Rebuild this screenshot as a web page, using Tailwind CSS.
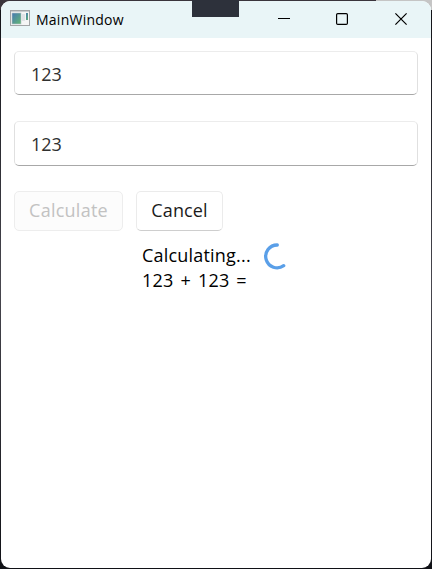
<!DOCTYPE html>
<html lang="en">
<head>
<meta charset="utf-8">
<title>MainWindow</title>
<script src="https://cdn.jsdelivr.net/npm/@tailwindcss/browser@4"></script>
</head>
<body class="h-[569px] w-[432px] overflow-hidden bg-linear-to-b from-[#101116] via-[#48474f] to-[#101116] font-['Open_Sans','Noto_Sans',sans-serif]">
<div class="relative h-full w-full bg-[linear-gradient(90deg,#3a343c_376px,#c5c5c5_376px)] bg-[length:100%_10px] bg-no-repeat px-px pt-px pb-px">
  <div class="flex h-full flex-col overflow-hidden rounded-[9px] bg-white">
    <header class="flex h-[37px] shrink-0 items-center bg-[#e9f5f7] pl-[9px]">
      <svg class="mb-[3px] shrink-0" width="20" height="16" viewBox="0 0 20 16">
        <defs><linearGradient id="g" x1="0" y1="0" x2="1" y2="1"><stop stop-color="#4778b4"/><stop offset="1" stop-color="#63b873"/></linearGradient></defs>
        <rect x=".5" y=".5" width="19" height="15" fill="#f5f5f5" stroke="#a3a5a7"/>
        <path d="M1 1.5h18" stroke="#c9cccf"/>
        <rect x="2" y="3" width="9" height="11" fill="url(#g)" stroke="#b9c4c8" stroke-width=".6"/>
        <path d="M12 4h3v7h-3z" fill="#e0e3e6"/>
        <rect x="16" y="3" width="2" height="7" fill="url(#g)"/>
      </svg>
      <h1 class="ml-[6px] text-[14px] leading-5 tracking-[.25px] text-black">MainWindow</h1>
      <div class="ml-auto flex h-full items-center text-black">
        <svg class="block" width="58" height="37" viewBox="0 0 58 37" fill="none" stroke="currentColor" stroke-width="1.2"><path d="M23 17.5h12"/></svg>
        <svg class="block" width="58" height="37" viewBox="0 0 58 37" fill="none" stroke="currentColor" stroke-width="1.2"><rect x="23.6" y="12.6" width="10.8" height="10.8" rx="1.2"/></svg>
        <svg class="block" width="60" height="37" viewBox="0 0 60 37" fill="none" stroke="currentColor" stroke-width="1.2"><path d="M24.4 12.4l11.2 11.2M35.6 12.4L24.4 23.6"/></svg>
      </div>
    </header>
    <main class="flex flex-col px-[13px] pt-[13px] text-[18px] leading-[25px]">
      <input aria-label="First number" class="block h-[44px] w-[404px] rounded-[5px] border border-[#e0e0e0] border-t-[#ececec] border-b-[#a8a8a8] bg-white px-4 pt-[2px] text-[#303030]" value="123">
      <input aria-label="Second number" class="mt-[26px] block h-[45px] w-[404px] rounded-[5px] border border-[#e0e0e0] border-t-[#ececec] border-b-[#a8a8a8] bg-white px-4 text-[#303030]" value="123">
      <div class="mt-[25px] flex gap-[13px]">
        <button disabled class="h-10 w-[109px] rounded-[5px] border border-[#ededed] bg-[#fcfcfc] pb-0.5 tracking-[.25px] text-[#c2c2c2]">Calculate</button>
        <button class="h-10 w-[87px] rounded-[5px] border border-[#ebebeb] border-b-[#cecece] bg-white pb-0.5 tracking-[.1px] text-[#1b1b1b]">Cancel</button>
      </div>
      <div class="mt-[11px] ml-[128px] flex">
        <div class="w-[121px] pt-px whitespace-nowrap text-black">
          <p class="tracking-[.2px]">Calculating...</p>
          <p class="tracking-[.2px] [word-spacing:2.1px]">123 + 123 =</p>
        </div>
        <svg width="26" height="28" viewBox="0 0 26 28" fill="none" stroke="#5a9fe8" stroke-width="3.3" stroke-linecap="round"><path d="M14.3 3A11.4 11.4 0 1 0 20.7 23.7"/></svg>
      </div>
    </main>
  </div>
  <div class="absolute top-0 left-[192px] h-[17px] w-[47px] bg-[#2d313b]"></div>
</div>
</body>
</html>
